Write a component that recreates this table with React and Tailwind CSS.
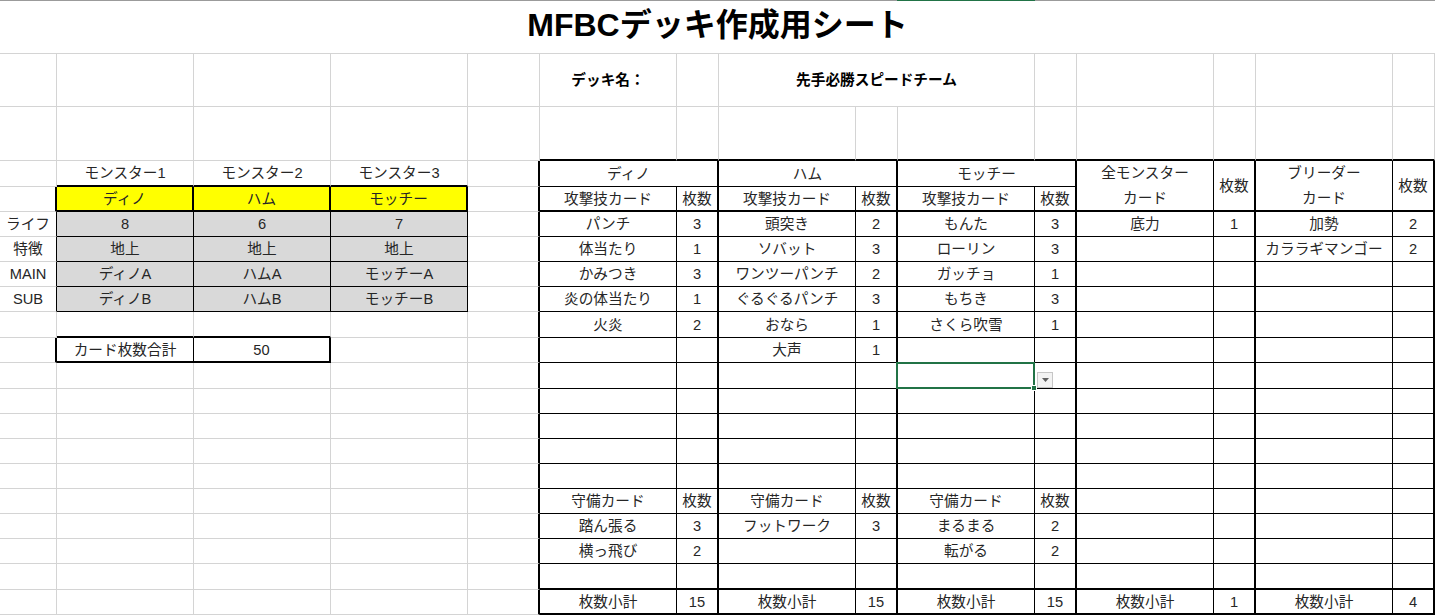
const R = {
  g: 'border-r border-r-[#d4d4d4]',
  k: 'border-r border-r-black',
  K: 'border-r-2 border-r-black',
}
const B = {
  g: 'border-b border-b-[#d4d4d4]',
  k: 'border-b border-b-black',
  K: 'border-b-2 border-b-black',
}

const leftW = ['w-[57px]', 'w-[137px]', 'w-[137px]', 'w-[137px]', 'w-[72px]']
const rightW = ['w-[137px]', 'w-[42px]', 'w-[137px]', 'w-[42px]', 'w-[137px]', 'w-[42px]', 'w-[137px]', 'w-[42px]', 'w-[137px]', 'w-[42px]']
const rowH = ['h-[26px]', 'h-[25px]', 'h-[25px]', 'h-[25px]', 'h-[25px]', 'h-[25px]', 'h-[26px]', 'h-[25px]', 'h-[26px]', 'h-[25px]', 'h-[25px]', 'h-[25px]', 'h-[25px]', 'h-[25px]', 'h-[25px]', 'h-[25px]', 'h-[26px]', 'h-[25px]']

const monsters = ['ディノ', 'ハム', 'モッチー']
const labels = ['ライフ', '特徴', 'MAIN', 'SUB']
const stats = [
  ['8', '6', '7'],
  ['地上', '地上', '地上'],
  ['ディノA', 'ハムA', 'モッチーA'],
  ['ディノB', 'ハムB', 'モッチーB'],
]

const empty = ['', '', '', '', '', '', '', '', '', '']
const body = [
  ['パンチ', '3', '頭突き', '2', 'もんた', '3', '底力', '1', '加勢', '2'],
  ['体当たり', '1', 'ソバット', '3', 'ローリン', '3', '', '', 'カララギマンゴー', '2'],
  ['かみつき', '3', 'ワンツーパンチ', '2', 'ガッチョ', '1', '', '', '', ''],
  ['炎の体当たり', '1', 'ぐるぐるパンチ', '3', 'もちき', '3', '', '', '', ''],
  ['火炎', '2', 'おなら', '1', 'さくら吹雪', '1', '', '', '', ''],
  ['', '', '大声', '1', '', '', '', '', '', ''],
  empty, empty, empty, empty, empty,
  ['守備カード', '枚数', '守備カード', '枚数', '守備カード', '枚数', '', '', '', ''],
  ['踏ん張る', '3', 'フットワーク', '3', 'まるまる', '2', '', '', '', ''],
  ['横っ飛び', '2', '', '', '転がる', '2', '', '', '', ''],
  empty,
  ['枚数小計', '15', '枚数小計', '15', '枚数小計', '15', '枚数小計', '1', '枚数小計', '4'],
]

function Cell({ w, h, r = 'g', b = 'g', bg = '', className = '', children }) {
  return (
    <div className={`relative flex shrink-0 items-center justify-center whitespace-nowrap ${w} ${h} ${R[r]} ${B[b]} ${bg} ${className}`}>
      {children}
    </div>
  )
}

function leftCells(i) {
  const e = { r: 'K', b: 'g' }
  const g = { r: 'g', b: 'g' }
  if (i === 0) return [g, ...[1, 2, 3].map((n) => ({ text: `モンスター${n}`, r: 'g', b: 'K' })), e]
  if (i === 1) return [{ r: 'K', b: 'g' }, ...monsters.map((m) => ({ text: m, r: 'K', b: 'K', bg: 'bg-[#ffff00]' })), e]
  if (i >= 2 && i <= 5)
    return [{ text: labels[i - 2], r: 'k', b: 'g' }, ...stats[i - 2].map((v) => ({ text: v, r: 'k', b: 'k', bg: 'bg-[#d9d9d9]' })), e]
  if (i === 6) return [g, { r: 'g', b: 'K' }, { r: 'g', b: 'K' }, g, e]
  if (i === 7) return [{ r: 'K', b: 'g' }, { text: 'カード枚数合計', r: 'k', b: 'K' }, { text: '50', r: 'K', b: 'K' }, g, e]
  return [g, g, g, g, e]
}

function SelectedCell() {
  return (
    <>
      <div className="absolute -top-px -right-px -bottom-px -left-[2px] z-10 border-2 border-[#217346]" />
      <div className="absolute -right-[3px] -bottom-[3px] z-20 h-[6px] w-[6px] border border-white bg-[#217346]" />
      <div className="absolute top-[9px] left-[139px] z-20 flex h-[16px] w-[16px] items-center justify-center border border-[#c6c6c6] bg-[#f3f3f3]">
        <svg width="7" height="4" viewBox="0 0 7 4">
          <polygon points="0,0 7,0 3.5,4" fill="#606060" />
        </svg>
      </div>
    </>
  )
}

export default function App() {
  return (
    <div className="h-[616px] w-[1435px] overflow-hidden bg-white text-[14.67px] text-[#262626] [font-family:'Liberation_Sans','Noto_Sans_CJK_JP',sans-serif]">
      <div className="flex h-px">
        <div className="w-[897px] bg-[#9b9b9b]" />
        <div className="w-[138px] bg-[#217346]" />
        <div className="flex-1 bg-[#9b9b9b]" />
      </div>

      <div className="flex h-[53px] items-center justify-center border-b border-b-[#d4d4d4] pb-1 text-[32px] font-bold text-black">
        MFBCデッキ作成用シート
      </div>

      <div className="flex">
        {leftW.map((w, i) => (
          <Cell key={i} w={w} h="h-[53px]" />
        ))}
        <Cell w="w-[137px]" h="h-[53px]" className="font-bold text-black">
          デッキ名：
        </Cell>
        <Cell w="w-[42px]" h="h-[53px]" />
        <Cell w="w-[316px]" h="h-[53px]" className="font-bold text-black">
          先手必勝スピードチーム
        </Cell>
        {rightW.slice(5).map((w, i) => (
          <Cell key={i} w={w} h="h-[53px]" />
        ))}
      </div>

      <div className="flex">
        {leftW.map((w, i) => (
          <Cell key={i} w={w} h="h-[54px]" />
        ))}
        {rightW.map((w, i) => (
          <Cell key={i} w={w} h="h-[54px]" b="K" />
        ))}
      </div>

      <div className="flex">
        <div className="flex flex-col">
          {rowH.map((h, i) => (
            <div key={i} className="flex">
              {leftCells(i).map((c, j) => (
                <Cell key={j} w={leftW[j]} h={h} r={c.r} b={c.b} bg={c.bg}>
                  {c.text}
                </Cell>
              ))}
            </div>
          ))}
        </div>

        <div className="flex flex-col">
          <div className="flex">
            {monsters.map((m) => (
              <div key={m} className="flex flex-col">
                <Cell w="w-[179px]" h="h-[26px]" r="K" b="k">
                  {m}
                </Cell>
                <div className="flex">
                  <Cell w="w-[137px]" h="h-[25px]" r="k" b="K">
                    攻撃技カード
                  </Cell>
                  <Cell w="w-[42px]" h="h-[25px]" r="K" b="K">
                    枚数
                  </Cell>
                </div>
              </div>
            ))}
            <Cell w="w-[137px]" h="h-[51px]" r="k" b="K" className="flex-col leading-[25px]">
              <span>全モンスター</span>
              <span>カード</span>
            </Cell>
            <Cell w="w-[42px]" h="h-[51px]" r="K" b="K">
              枚数
            </Cell>
            <Cell w="w-[137px]" h="h-[51px]" r="k" b="K" className="flex-col leading-[25px]">
              <span>ブリーダー</span>
              <span>カード</span>
            </Cell>
            <Cell w="w-[42px]" h="h-[51px]" r="K" b="K">
              枚数
            </Cell>
          </div>

          {body.map((row, k) => {
            const idx = k + 2
            return (
              <div key={k} className="flex">
                {row.map((t, j) => (
                  <Cell key={j} w={rightW[j]} h={rowH[idx]} r={j % 2 === 0 ? 'k' : 'K'} b={idx >= 16 ? 'K' : 'k'}>
                    {t}
                    {idx === 8 && j === 4 ? <SelectedCell /> : null}
                  </Cell>
                ))}
              </div>
            )
          })}
        </div>
      </div>
    </div>
  )
}
